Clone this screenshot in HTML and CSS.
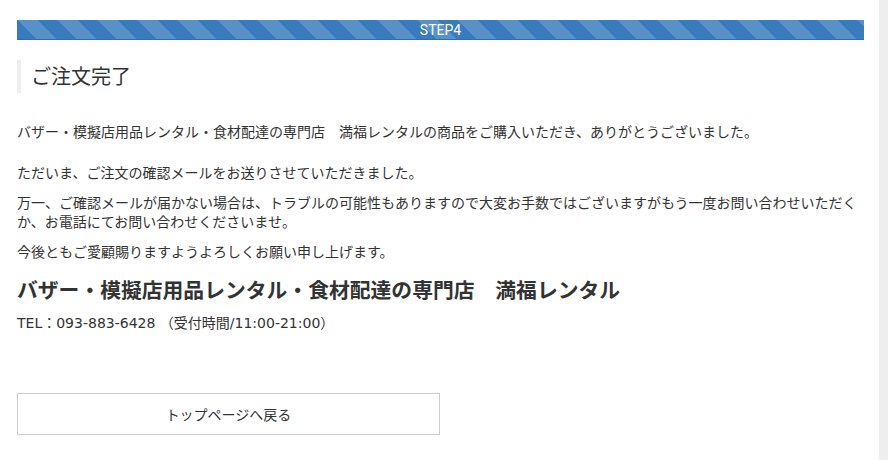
FILE: index.html
```html
<!DOCTYPE html>
<html lang="ja">
<head>
<meta charset="utf-8">
<title>ご注文完了</title>
<link rel="stylesheet" href="styles.css">
</head>
<body>
<div class="page">
  <main class="content">
    <div class="step-bar">STEP4</div>
    <h1 class="page-title">ご注文完了</h1>
    <p class="msg msg-first">バザー・模擬店用品レンタル・食材配達の専門店　満福レンタルの商品をご購入いただき、ありがとうございました。</p>
    <p class="msg">ただいま、ご注文の確認メールをお送りさせていただきました。</p>
    <p class="msg">万一、ご確認メールが届かない場合は、トラブルの可能性もありますので大変お手数ではございますがもう一度お問い合わせいただくか、お電話にてお問い合わせくださいませ。</p>
    <p class="msg">今後ともご愛顧賜りますようよろしくお願い申し上げます。</p>
    <h2 class="shop-name">バザー・模擬店用品レンタル・食材配達の専門店　満福レンタル</h2>
    <p class="tel">TEL：093-883-6428 （受付時間/11:00-21:00）</p>
    <a class="back-btn" href="#">トップページへ戻る</a>
  </main>
  <div class="side-strip"></div>
</div>
</body>
</html>
```
FILE: styles.css
```css
html, body {
  margin: 0;
  padding: 0;
  background: #fff;
}
body {
  font-family: "Noto Sans CJK JP", "Liberation Sans", sans-serif;
  color: #333;
  font-size: 14px;
}
.page {
  display: flex;
  width: 888px;
  height: 460px;
  overflow: hidden;
}
.content {
  flex: 1;
  padding: 20px 15px 0 17px;
  display: flex;
  flex-direction: column;
  align-items: stretch;
}
.side-strip {
  width: 9px;
  background: #eeeeee;
}
.step-bar {
  height: 19px;
  line-height: 20px;
  border-bottom: 1px solid #2f6ea9;
  text-align: center;
  color: #fff;
  font-family: Roboto, "Liberation Sans", sans-serif;
  font-size: 14px;
  background-color: #3a7bbd;
  background-image: repeating-linear-gradient(45deg, #3a7bbd 0, #3a7bbd 14.14px, #5891c7 14.14px, #5891c7 28.28px);
}
.page-title {
  margin: 20px 0 0;
  height: 33px;
  line-height: 32px;
  border-left: 4px solid #eeeeee;
  padding-left: 10px;
  font-size: 20px;
  font-weight: normal;
  color: #333;
}
.msg {
  margin: 11px 0 0;
  line-height: 19px;
  font-size: 14px;
}
.msg-first {
  margin-top: 29px;
  margin-bottom: 11px;
}
.shop-name {
  margin: 13px 0 0;
  font-size: 20.8px;
  line-height: 30px;
  font-weight: bold;
  color: #333;
}
.tel {
  margin: 10px 0 0;
  line-height: 19px;
  font-size: 14px;
  font-family: "DejaVu Sans", "Noto Sans CJK JP", sans-serif;
}
.back-btn {
  margin-top: 60px;
  width: 421px;
  height: 40px;
  line-height: 40px;
  border: 1px solid #cccccc;
  text-align: center;
  color: #333;
  text-decoration: none;
  font-size: 14px;
}
```
